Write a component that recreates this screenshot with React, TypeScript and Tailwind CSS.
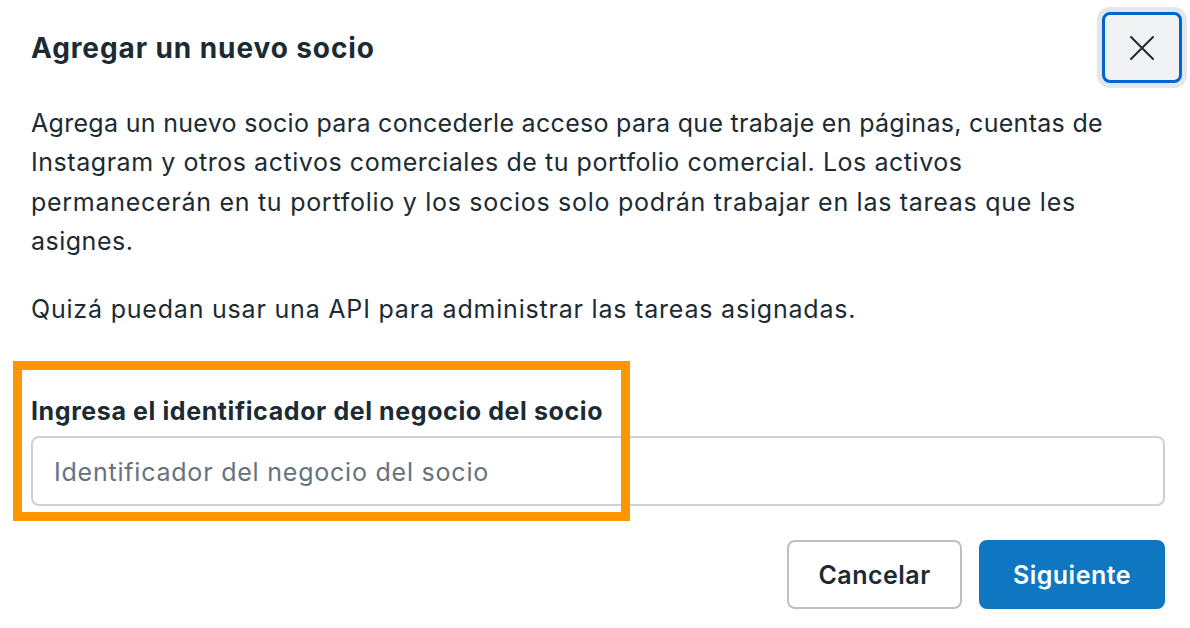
import React from "react";

export default function App() {
  return (
    <div
      className="relative w-[1190px] h-[628px] bg-white text-[#1c2b33] overflow-hidden"
      style={{ fontFamily: "Inter, 'Noto Sans', sans-serif" }}
    >
      <div className="flex flex-col pl-[31px] pr-[25px]">
        <div className="flex items-center justify-between pt-[12px]">
          <h1 className="text-[28px] leading-[32px] font-bold tracking-[0.9px]">Agregar un nuevo socio</h1>
          <button className="w-[80px] h-[71px] mr-[-17px] rounded-[8px] border-[3px] border-[#0064d1] bg-[#f1f2f4] flex items-center justify-center shadow-[0_0_0_5px_#e4e6eb]">
            <svg width="26" height="26" viewBox="0 0 26 26" fill="none">
              <path d="M2 2L24 24M24 2L2 24" stroke="#1c2b33" strokeWidth="2" strokeLinecap="round" />
            </svg>
          </button>
        </div>
        <p className="mt-[21px] text-[25px] leading-[39.33px] whitespace-nowrap">
          <span className="tracking-[0.3px]">
            Agrega un nuevo socio para concederle acceso para que trabaje en páginas, cuentas de
          </span>
          <br />
          <span className="tracking-[0.55px]">
            Instagram y otros activos comerciales de tu portfolio comercial. Los activos
          </span>
          <br />
          <span className="tracking-[0.72px]">
            permanecerán en tu portfolio y los socios solo podrán trabajar en las tareas que les
          </span>
          <br />
          <span className="tracking-[0.5px]">asignes.</span>
        </p>
        <p className="mt-[29px] text-[25px] leading-[39.33px] tracking-[0.8px]">
          Quizá puedan usar una API para administrar las tareas asignadas.
        </p>
        <label className="mt-[65px] text-[25px] leading-[32px] font-bold tracking-[0.6px]">
          Ingresa el identificador del negocio del socio
        </label>
        <div className="mt-[9px] h-[70px] w-[1134px] rounded-[8px] border-2 border-[#ced0d4] flex items-center px-[21px] pt-[4px]">
          <span className="text-[25px] text-[#65737e] tracking-[0.78px]">Identificador del negocio del socio</span>
        </div>
        <div className="mt-[34px] flex justify-end gap-[17px] w-[1134px]">
          <button className="w-[175px] h-[69px] pt-[4px] rounded-[8px] border-2 border-[#bcc0c4] bg-white text-[25px] font-semibold tracking-[0.5px] text-[#1c2b33]">
            Cancelar
          </button>
          <button className="w-[186px] h-[69px] pt-[4px] rounded-[8px] bg-[#0f76c1] text-[25px] font-semibold tracking-[0.5px] text-white">
            Siguiente
          </button>
        </div>
      </div>
      <div className="absolute left-[13px] top-[361px] w-[617px] h-[160px] border-[9px] border-[#ff9500]" />
    </div>
  );
}
